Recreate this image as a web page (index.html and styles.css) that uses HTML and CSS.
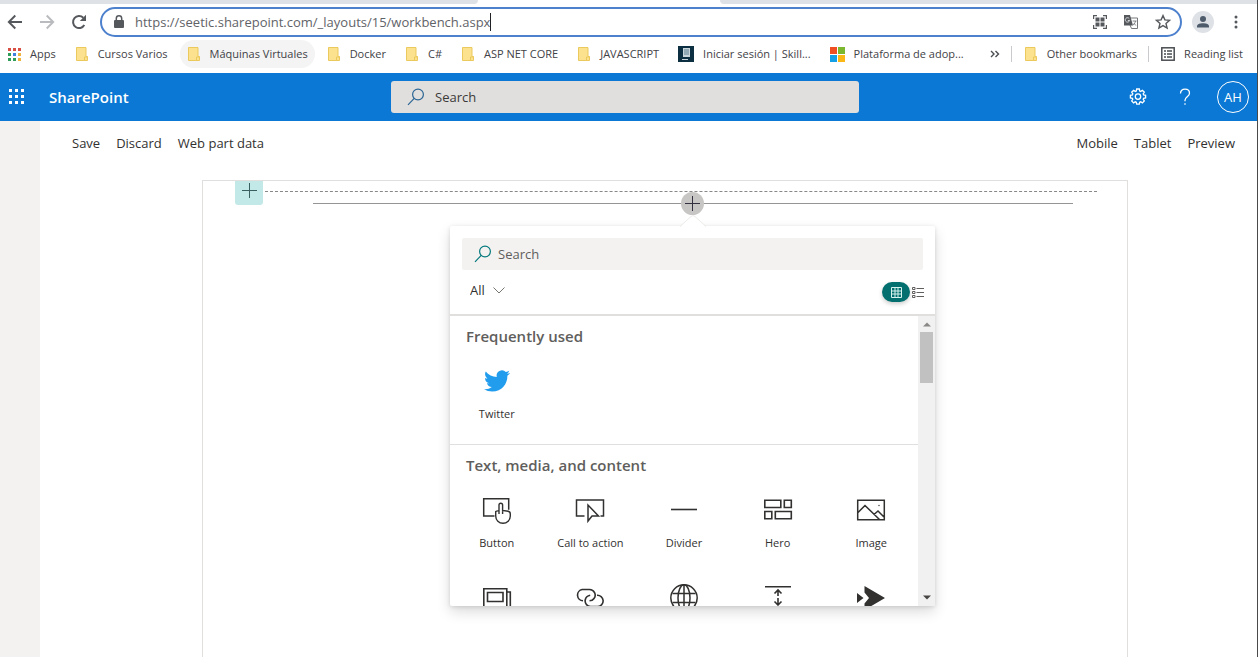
FILE: index.html
```html
<!DOCTYPE html>
<html lang="en">
<head>
<meta charset="utf-8">
<title>SharePoint Workbench</title>
<link rel="stylesheet" href="styles.css">
</head>
<body>
<svg class="defs" aria-hidden="true">
  <symbol id="folder" viewBox="0 0 14 14"><path d="M1.5.5h9.5v9h1.500v4h-11z" fill="#fce28f" stroke="#ecc95c"/><path d="M9.500 13.500v-3.500h3" fill="none" stroke="#ecc95c"/></symbol>
  <symbol id="lens" viewBox="0 0 18 18"><circle cx="11" cy="6.500" r="5.400" fill="none" stroke="currentColor" stroke-width="1.200"/><path d="M7.200 10.400 1 16.800" stroke="currentColor" stroke-width="1.200"/></symbol>
</svg>
<div class="window">
  <div class="tabs"><span class="tab-left"></span><span class="tab-active"></span><span class="tab-right"></span></div>
  <header class="toolbar">
    <nav class="nav-buttons">
      <button class="icon-button" aria-label="Back"><svg width="16" height="16" viewBox="0 0 16 16" fill="none" stroke="#55585c" stroke-width="1.900"><path d="M15 8H2M8.300 1.500 1.800 8l6.500 6.500"/></svg></button>
      <button class="icon-button" aria-label="Forward"><svg width="16" height="16" viewBox="0 0 16 16" fill="none" stroke="#b9bbbe" stroke-width="1.900"><path d="M1 8h13M7.700 1.500 14.200 8l-6.500 6.500"/></svg></button>
      <button class="icon-button" aria-label="Reload"><svg width="16" height="16" viewBox="0 0 16 16"><path d="M13.300 11A6 6 0 1 1 12.300 3.800" fill="none" stroke="#55585c" stroke-width="2"/><path d="M15 .8v6.200H8.800z" fill="#55585c"/></svg></button>
    </nav>
    <div class="omnibox">
      <svg width="10" height="14" viewBox="0 0 10 14"><rect y="5" width="10" height="8" rx="1" fill="#55585c"/><path d="M2.300 6V3.500a2.700 2.700 0 0 1 5.400 0V6" fill="none" stroke="#55585c" stroke-width="1.500"/></svg>
      <div class="address"><input class="url" aria-label="Address" value="https://seetic.sharepoint.com/_layouts/15/workbench.aspx"><span class="caret"></span></div>
      <div class="page-actions">
        <button class="icon-button" aria-label="QR code"><svg width="14" height="14" viewBox="0 0 14 14"><path d="M2.500 2.500h4v4h-4zM7.500 2.500h4v4h-4zM2.500 7.500h4v4h-4zM7.500 7.500h4v4h-4z" fill="#55585c"/><path d="M.6 4V.6H4M10 .6h3.400V4M13.400 10v3.400H10M4 13.400H.6V10" fill="none" stroke="#55585c" stroke-width="1.200"/></svg></button>
        <button class="icon-button" aria-label="Translate"><svg width="16" height="14" viewBox="0 0 16 14"><path d="M7 3h7.500v10.500H8.500L7 10" fill="#fff" stroke="#74777b"/><path d="M1 0h6l3 10.500H1z" fill="#55585c"/><path d="M6.300 3.700A2.200 2.200 0 1 0 6.600 5.500H4.800" fill="none" stroke="#e3e4e6" stroke-width=".9"/><path d="M9.600 6h4M12.500 6c-.5 2-1 3-2.500 4M10.800 8l2 2.500" fill="none" stroke="#74777b" stroke-width=".9"/></svg></button>
        <button class="icon-button" aria-label="Bookmark"><svg width="16" height="16" viewBox="0 0 16 16"><path d="M8 1.600l1.900 4.300 4.700.4-3.600 3.100 1.100 4.600L8 11.600 3.900 14 5 9.400 1.400 6.300l4.700-.4z" fill="none" stroke="#55585c" stroke-width="1.400"/></svg></button>
      </div>
    </div>
    <button class="profile" aria-label="Profile"><svg width="14" height="14" viewBox="0 0 14 14" fill="#4d5b6b"><circle cx="7" cy="4" r="3"/><path d="M1 12.500v-1.200C1 9 4 8.200 7 8.200s6 .8 6 3.100v1.200z"/></svg></button>
    <button class="icon-button" aria-label="Menu"><svg width="4" height="14" viewBox="0 0 4 14" fill="#55585c"><circle cx="2" cy="2" r="1.500"/><circle cx="2" cy="7" r="1.500"/><circle cx="2" cy="12" r="1.500"/></svg></button>
  </header>

  <nav class="bookmarks" aria-label="Bookmarks">
    <div class="bookmark-group">
      <a class="bookmark" href="#"><svg width="13" height="13" viewBox="0 0 13 13"><path d="M0 0h3v3H0zM5 0h3v3H5zM10 0h3v3h-3z" fill="#d94f43"/><path d="M0 5h3v3H0zM0 10h3v3H0z" fill="#2f9e5b"/><path d="M5 5h3v3H5z" fill="#3f7fe0"/><path d="M10 5h3v3h-3zM10 10h3v3h-3z" fill="#efb23b"/><path d="M5 10h3v3H5z" fill="#2f9e5b"/></svg><span>Apps</span></a>
      <a class="bookmark" href="#"><svg class="folder"><use href="#folder"/></svg><span>Cursos Varios</span></a>
      <a class="bookmark hovered" href="#"><svg class="folder"><use href="#folder"/></svg><span>Máquinas Virtuales</span></a>
      <a class="bookmark" href="#"><svg class="folder"><use href="#folder"/></svg><span>Docker</span></a>
      <a class="bookmark" href="#"><svg class="folder"><use href="#folder"/></svg><span>C#</span></a>
      <a class="bookmark" href="#"><svg class="folder"><use href="#folder"/></svg><span>ASP NET CORE</span></a>
      <a class="bookmark" href="#"><svg class="folder"><use href="#folder"/></svg><span>JAVASCRIPT</span></a>
      <a class="bookmark" href="#"><svg width="16" height="16" viewBox="0 0 16 16"><path d="M0 0h16v16H0z" fill="#0c2f42"/><path d="M5 2h7v9H5z" fill="#c8d6dc"/><path d="M6 4h5M6 6h5M6 8h5" stroke="#5d7f8e"/><path d="M4 13h6v1H4z" fill="#c8d6dc"/></svg><span>Iniciar sesión | Skill...</span></a>
      <a class="bookmark" href="#"><svg width="15" height="15" viewBox="0 0 15 15"><path d="M0 0h7v7H0z" fill="#f04e23"/><path d="M8 0h7v7H8z" fill="#7cb82f"/><path d="M0 8h7v7H0z" fill="#159fe6"/><path d="M8 8h7v7H8z" fill="#fbb716"/></svg><span>Plataforma de adop...</span></a>
    </div>
    <div class="bookmark-group end">
      <button class="icon-button" aria-label="More bookmarks"><svg width="10" height="8" viewBox="0 0 10 8" fill="none" stroke="#4a4d51" stroke-width="1.400"><path d="M1 1l3 3-3 3M5.500 1l3 3-3 3"/></svg></button>
      <a class="bookmark divided" href="#"><svg class="folder"><use href="#folder"/></svg><span>Other bookmarks</span></a>
      <a class="bookmark divided" href="#"><svg width="14" height="14" viewBox="0 0 14 14"><rect x=".8" y=".8" width="12.400" height="12.400" fill="none" stroke="#4a4d51" stroke-width="1.500"/><path d="M3 4h2M6 4h5M3 7h2M6 7h5M3 10h2M6 10h5" stroke="#4a4d51" stroke-width="1.400"/></svg><span>Reading list</span></a>
    </div>
  </nav>

  <header class="suite">
    <div class="suite-start">
      <button class="icon-button" aria-label="App launcher"><svg width="16" height="16" viewBox="0 0 16 16" fill="#fff"><path d="M0 0h3v3H0zM6 0h3v3H6zM12 0h3v3h-3zM0 6h3v3H0zM6 6h3v3H6zM12 6h3v3h-3zM0 12h3v3H0zM6 12h3v3H6zM12 12h3v3h-3z"/></svg></button>
      <a class="brand" href="#">SharePoint</a>
    </div>
    <label class="suite-search"><svg class="lens"><use href="#lens"/></svg><input placeholder="Search" aria-label="Search SharePoint"></label>
    <div class="suite-actions">
      <button class="icon-button" aria-label="Settings"><svg width="18" height="18" viewBox="0 0 18 18" fill="none" stroke="#fff" stroke-width="1.300"><path d="M7.700 1h2.600l.4 2 1 .4 1.700-1.100 1.900 1.900-1.100 1.700.4 1 2 .4v2.600l-2 .4-.4 1 1.100 1.700-1.900 1.900-1.700-1.100-1 .4-.4 2H7.700l-.4-2-1-.4-1.700 1.100L2.700 13l1.100-1.700-.4-1-2-.4V7.300l2-.4.4-1-1.100-1.700 1.900-1.900 1.700 1.100 1-.4z"/><circle cx="9" cy="8.600" r="2.700"/></svg></button>
      <button class="icon-button" aria-label="Help"><svg width="12" height="18" viewBox="0 0 12 18" fill="none" stroke="#fff" stroke-width="1.300"><path d="M1.500 5.500C1.500 2.800 3.300 1.200 6 1.200s4.500 1.600 4.500 4c0 3.300-4.500 3.800-4.500 7v1"/><path d="M6 15.200v1.600"/></svg></button>
      <button class="avatar">AH</button>
    </div>
  </header>

  <div class="workbench">
    <aside class="rail"></aside>
    <main class="page">
      <div class="commands">
        <button class="command">Save</button><button class="command">Discard</button><button class="command">Web part data</button>
        <span class="spacer"></span>
        <button class="command">Mobile</button><button class="command">Tablet</button><button class="command">Preview</button>
      </div>
      <div class="canvas">
        <div class="section-row">
          <button class="add-section" aria-label="Add section"><svg width="15" height="15" viewBox="0 0 15 15" stroke="#3b5f60"><path d="M7.500 0v15M0 7.500h15"/></svg></button>
          <div class="dashes"></div>
        </div>
        <div class="zone">
          <button class="add-part" aria-label="Add web part"><svg width="15" height="15" viewBox="0 0 15 15" stroke="#33303f"><path d="M7.500 0v15M0 7.500h15"/></svg></button>
          <section class="callout" aria-label="Web parts">
            <svg class="beak" width="26" height="12" viewBox="0 0 26 12"><path d="M0 12 11 1.500q2-2 4 0L26 12z" fill="#fff"/><path d="M0 11.500 11 1.500q2-2 4 0L26 11.500" fill="none" stroke="#ecebea"/></svg>
            <div class="callout-head">
              <label class="part-search"><svg class="lens"><use href="#lens"/></svg><input placeholder="Search" aria-label="Search web parts"></label>
              <div class="filters">
                <label class="filter"><select aria-label="Category"><option>All</option></select><svg width="12" height="7" viewBox="0 0 12 7" fill="none" stroke="#77756f"><path d="M.5.500 6 6 11.500.5"/></svg></label>
                <div class="views">
                  <button class="view-grid" aria-label="Grid view"><svg width="11" height="11" viewBox="0 0 11 11" fill="none" stroke="#d8f2f0"><path d="M.5.500h10v10H.5zM4 .5v10M7 .5v10M.5 4h10M.5 7h10"/></svg></button>
                  <button class="icon-button" aria-label="List view"><svg width="12" height="11" viewBox="0 0 12 11" fill="none" stroke="#605e5c"><path d="M.5.500h2.500v2H.5zM.5 4.500h2.500v2H.5zM.5 8.500h2.500v2H.5zM4.500 1.500H12M4.500 5.500H12M4.500 9.500H12"/></svg></button>
                </div>
              </div>
            </div>
            <div class="callout-body">
              <div class="part-list">
                <section class="group">
                  <h2>Frequently used</h2>
                  <div class="tiles">
                    <button class="tile"><svg width="26" height="28" viewBox="0 0 24 24" fill="#229ded"><path d="M23.953 4.570a10 10 0 0 1-2.825.775 4.958 4.958 0 0 0 2.163-2.723c-.951.555-2.005.959-3.127 1.184a4.920 4.920 0 0 0-8.384 4.482C7.690 8.095 4.067 6.130 1.640 3.162a4.822 4.822 0 0 0-.666 2.475c0 1.710.870 3.213 2.188 4.096a4.904 4.904 0 0 1-2.228-.616v.060a4.923 4.923 0 0 0 3.946 4.827 4.996 4.996 0 0 1-2.212.085 4.936 4.936 0 0 0 4.604 3.417 9.867 9.867 0 0 1-6.102 2.105c-.390 0-.779-.023-1.170-.067a13.995 13.995 0 0 0 7.557 2.209c9.053 0 13.998-7.496 13.998-13.985 0-.210 0-.420-.015-.630A9.935 9.935 0 0 0 24 4.590z"/></svg><span>Twitter</span></button>
                  </div>
                </section>
                <section class="group">
                  <h2>Text, media, and content</h2>
                  <div class="tiles">
                    <button class="tile"><svg width="30" height="28" viewBox="0 0 30 28"><path d="M12.500 20H1.700V2.700h25v11" fill="none" stroke="#323130" stroke-width="1.500"/><path d="M17 18V9a1.800 1.800 0 0 1 3.600 0v5.500l5.500.8q2.200.4 2.200 2.700v2a7.300 7.300 0 0 1-14.600 0v-4.500q1.500-1 3.300-.5M20.600 14.500V18" fill="#fff" stroke="#323130" stroke-width="1.400"/></svg><span>Button</span></button>
                    <button class="tile"><svg width="30" height="28" viewBox="0 0 30 28" fill="none" stroke="#323130" stroke-width="1.500"><path d="M9.500 20H1.500V4h27v16h-3"/><path d="M13 9v16l4-5h6.500z"/></svg><span>Call to action</span></button>
                    <button class="tile"><svg width="28" height="28" viewBox="0 0 28 28" stroke="#323130" stroke-width="1.600"><path d="M1 13.500h26"/></svg><span>Divider</span></button>
                    <button class="tile"><svg width="30" height="28" viewBox="0 0 30 28" fill="none" stroke="#323130" stroke-width="1.600"><path d="M1.800 4.300h16v7.200h-16zM21.300 4.300h7v7.200h-7zM1.800 15.500h7v7.200h-7zM12.300 15.500h16v7.200h-16z"/></svg><span>Hero</span></button>
                    <button class="tile"><svg width="30" height="28" viewBox="0 0 30 28" fill="none" stroke="#323130" stroke-width="1.500"><path d="M1.700 4.300h26.600v19.500H1.700zM2 16.500l7-7L23.500 23.500M18 18.500l4-3.500 6.500 6.500"/><circle cx="23" cy="9.500" r=".7" fill="#323130" stroke="none"/></svg><span>Image</span></button>
                    <button class="tile" aria-label="Image gallery"><svg width="30" height="28" viewBox="0 0 30 28" fill="none" stroke="#323130" stroke-width="1.600"><path d="M1.800 4.800h23v18h-23zM5.500 8.500h15.500v9H5.500zM24.800 8h3.500v18.200H6V23"/></svg></button>
                    <button class="tile" aria-label="Link"><svg width="30" height="28" viewBox="0 0 30 28" fill="none" stroke="#323130" stroke-width="1.600"><path d="M8 16.800A5.700 5.700 0 0 1 7.200 5.500h7.300a5.600 5.600 0 0 1 4.500 9q-1.500 2.300-4.500 2.300M22 11.300a5.600 5.600 0 0 1 1 11.200h-7.500a5.600 5.600 0 0 1-5.300-6.500q.8-4 5-4.700"/></svg></button>
                    <button class="tile" aria-label="Embed"><svg width="30" height="28" viewBox="0 0 30 28" fill="none" stroke="#323130" stroke-width="1.500"><circle cx="15" cy="14" r="13.200"/><ellipse cx="15" cy="14" rx="6" ry="13.200"/><path d="M15 1v26M3.500 9.500h23M3.500 18.500h23"/></svg></button>
                    <button class="tile" aria-label="Spacer"><svg width="28" height="28" viewBox="0 0 28 28" fill="none" stroke="#323130" stroke-width="1.600"><path d="M1 2.800h26M14 6v6M10.500 9.500 14 6l3.500 3.500M14 14v7M10.500 17.500 14 21l3.500-3.500"/></svg></button>
                    <button class="tile" aria-label="Stream"><svg width="30" height="28" viewBox="0 0 30 28" fill="#323130"><path d="M8.500 2 29 14 8.500 26v-6.500L13 14 8.500 8.500zM1 9l6.500 5L1 19z"/></svg></button>
                  </div>
                </section>
              </div>
              <div class="scrollbar" aria-hidden="true">
                <svg width="8" height="5" viewBox="0 0 8 5" fill="#8a8886"><path d="M0 4.500 4 .5l4 4z"/></svg>
                <div class="track"><div class="thumb"></div></div>
                <svg width="8" height="5" viewBox="0 0 8 5" fill="#484644"><path d="M0 .5h8l-4 4z"/></svg>
              </div>
            </div>
          </section>
        </div>
      </div>
    </main>
  </div>
</div>
</body>
</html>
```
FILE: styles.css
```css
* { box-sizing: border-box; }
body { margin: 0; background: #fff; color: #323130; font: 13px/20px "Open Sans", "Noto Sans", sans-serif; }
button, input, select { font: inherit; color: inherit; margin: 0; padding: 0; border: 0; background: none; outline: 0; }
a { color: inherit; text-decoration: none; }
svg { display: block; flex: none; }
.defs { position: absolute; width: 0; height: 0; }
.window { display: flex; flex-direction: column; min-height: 100vh; border-right: 1px solid #4a4a4a; }
.icon-button { display: flex; align-items: center; justify-content: center; }

.tabs { display: flex; height: 4px; background: #fff; }
.tab-left { flex: 478; background: #dee1e6; border-bottom-right-radius: 4px; }
.tab-active { flex: 242; }
.tab-right { flex: 537; background: #dee1e6; border-bottom-left-radius: 4px; }

.toolbar { display: flex; align-items: center; height: 36px; padding: 0 19px 0 7px; }
.nav-buttons { display: flex; gap: 16px; margin-right: 13px; }
.omnibox { flex: 1; display: flex; align-items: center; height: 30px; padding: 0 9px 0 12px; border: 2px solid #4d80cd; border-radius: 15px; }
.address { flex: 1; display: flex; align-items: center; margin-left: 11px; min-width: 0; }
.url { field-sizing: content; color: #5f6368; }
.caret { width: 1px; height: 18px; background: #202124; }
.page-actions { display: flex; align-items: center; gap: 16px; }
.profile { display: flex; align-items: center; justify-content: center; width: 22px; height: 22px; margin: 0 20px 0 10px; border-radius: 50%; background: #dee1e6; }

.bookmarks { display: flex; align-items: center; justify-content: space-between; height: 32px; margin-bottom: 1px; padding: 0 14px 4px 8px; font-size: 11px; color: #3f4246; white-space: nowrap; }
.bookmark-group { display: flex; align-items: center; gap: 19px; }
.bookmark-group.end { gap: 11px; }
.bookmark { display: flex; align-items: center; gap: 9px; height: 28px; }
.bookmark.hovered { padding: 0 7px; margin: 0 -7px; border-radius: 14px; background: #f4f4f4; }
.bookmark.divided::before { content: ""; width: 1px; height: 16px; margin-right: 3px; background: #c8cacd; }
.folder { width: 14px; height: 14px; }

.suite { display: grid; grid-template-columns: 382fr 468px 390fr; align-items: center; height: 48px; padding: 0 8px 0 9px; background: #0a78d4; color: #fff; }
.suite-start { display: flex; align-items: center; gap: 24px; }
.brand { font-size: 15px; font-weight: 600; }
.suite-search { display: flex; align-items: center; height: 32px; padding: 0 16px; gap: 10px; border-radius: 3px; background: #e1dfdd; color: #2b6594; }
.lens { width: 18px; height: 18px; }
.suite-search input, .part-search input { flex: 1; min-width: 0; }
.suite-search input::placeholder { color: #3b3a39; opacity: 1; }
.suite-actions { display: flex; align-items: center; justify-content: flex-end; }
.suite-actions .icon-button { margin-right: 32px; }
.suite-actions .icon-button + .icon-button { margin-right: 26px; }
.avatar { width: 32px; height: 32px; border: 1px solid #fff; border-radius: 50%; font-size: 13px; }

.workbench { flex: 1; display: flex; }
.rail { width: 40px; background: #f3f2f1; }
.page { flex: 1; display: flex; flex-direction: column; }
.commands { display: flex; gap: 16px; padding: 12px 22px 0 32px; }
.spacer { flex: 1; }
.canvas { flex: 1; margin: 27px 129px 0 162px; border: 1px solid #e1dfdd; border-bottom: 0; }
.section-row { display: flex; gap: 2px; padding: 0 30px 0 32px; }
.add-section { display: flex; align-items: center; justify-content: center; width: 28px; height: 24px; padding-bottom: 5px; border-radius: 0 0 3px 3px; background: #c3e8e8; }
.dashes { flex: 1; height: 11px; border-bottom: 1px dashed #8a8886; }
.zone { position: relative; margin: -2px 54px 0 110px; border-top: 1px solid #979593; }
.add-part { position: absolute; top: -12px; left: calc(50% - 12px); display: flex; align-items: center; justify-content: center; width: 23px; height: 23px; border-radius: 50%; background: #c8c6c4; }

.callout { position: absolute; top: 22px; left: calc(50% - 243px); width: 485px; background: #fff; border-radius: 2px; box-shadow: 0 6px 14px rgba(0, 0, 0, .14), 0 1px 4px rgba(0, 0, 0, .12); }
.beak { position: absolute; top: -11px; left: calc(50% - 13px); }
.callout-head { padding: 12px; border-bottom: 2px solid #e1dfdd; }
.part-search { display: flex; align-items: center; gap: 6px; height: 32px; padding: 0 12px; border-radius: 2px; background: #f3f2f1; color: #03787c; }
.part-search input::placeholder { color: #605e5c; opacity: 1; }
.filters { display: flex; align-items: flex-start; justify-content: space-between; padding: 10px 0 0 8px; }
.filter { display: flex; align-items: center; gap: 8px; }
.filter select { appearance: none; field-sizing: content; }
.views { display: flex; align-items: center; gap: 2px; padding-top: 2px; margin-right: -1px; }
.view-grid { display: flex; align-items: center; justify-content: center; width: 28px; height: 20px; border-radius: 10px; background: #03706f; box-shadow: 0 2px 4px rgba(0, 0, 0, .2); }
.callout-body { display: flex; height: 290px; }
.part-list { flex: 1; overflow: hidden; }
.group + .group { border-top: 1px solid #e1dfdd; }
.group h2 { margin: 0; padding: 9px 16px 0; font-size: 15px; line-height: 22px; font-weight: 600; color: #605e5c; }
.tiles { display: grid; grid-template-columns: repeat(5, 1fr); padding-bottom: 9px; }
.tile { display: flex; flex-direction: column; align-items: center; gap: 9px; height: 88px; padding-top: 20px; font-size: 11px; line-height: 20px; }
.scrollbar { display: flex; flex-direction: column; align-items: center; justify-content: space-between; width: 17px; padding: 6px 0; background: #f1f1f1; }
.track { flex: 1; width: 13px; margin: 5px 0; }
.thumb { height: 51px; background: #c1c1c1; }
```
